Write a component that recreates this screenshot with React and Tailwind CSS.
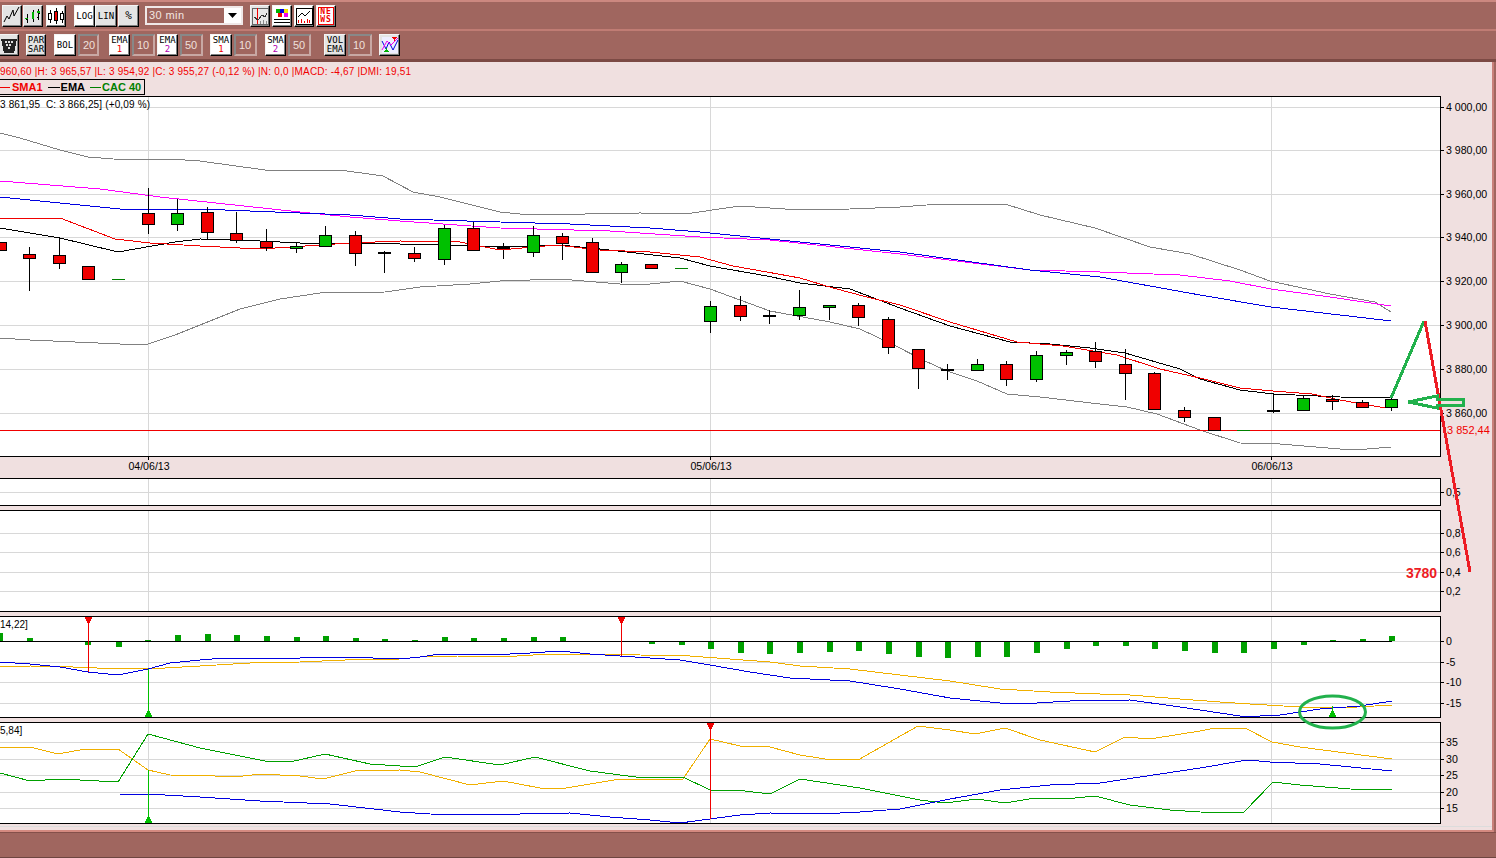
import React from "react";

const RED = "#f00000";
const CANDLES = [
  [0, "r", 242, 250, 242, 250], [29, "r", 254, 258, 247, 290], [59, "r", 255, 263, 238, 268], [88, "r", 266, 279, 266, 279],
  [118, "d", 279], [148, "r", 213, 224, 188, 233], [177, "g", 213, 224, 199, 230], [207, "r", 212, 232, 207, 238],
  [236, "r", 233, 240, 212, 242], [266, "r", 241, 247, 229, 250], [296, "g", 246, 248, 242, 252], [325, "g", 235, 246, 226, 246],
  [355, "r", 235, 253, 231, 265], [384, "k", 252, 251, 273], [414, "r", 253, 258, 247, 261], [444, "g", 228, 259, 225, 264],
  [473, "r", 228, 250, 222, 250], [503, "b", 247, 243, 259], [533, "g", 235, 252, 226, 256], [562, "r", 236, 243, 233, 259],
  [592, "r", 242, 272, 238, 272], [621, "g", 264, 272, 262, 282], [651, "r", 264, 268, 264, 268], [681, "d", 268],
  [710, "g", 306, 321, 301, 332], [740, "r", 305, 316, 296, 320], [769, "k", 315, 310, 324], [799, "g", 307, 315, 290, 319],
  [829, "g", 305, 307, 305, 319], [858, "r", 305, 317, 303, 325], [888, "r", 319, 347, 317, 353], [918, "r", 349, 368, 349, 388],
  [947, "k", 369, 364, 380], [977, "g", 364, 370, 359, 370], [1006, "r", 364, 379, 361, 385], [1036, "g", 355, 379, 351, 381],
  [1066, "g", 352, 355, 350, 364], [1095, "r", 351, 361, 342, 367], [1125, "r", 364, 373, 349, 399], [1154, "r", 373, 409, 372, 409],
  [1184, "r", 410, 417, 407, 421], [1214, "r", 417, 430, 417, 430], [1273, "k", 410, 393, 413], [1303, "g", 398, 410, 396, 410],
  [1332, "r", 399, 401, 395, 409], [1362, "r", 402, 407, 400, 407], [1391, "g", 399, 407, 397, 410],
];
const BOLU = "0,133 20,138 60,150 88,157 113,159 148,160 170,159 200,161 265,170 340,170 383,176 413,192 440,197 500,212 530,215 640,213 685,214 740,206 800,210 850,209 900,207 940,204 1005,204 1040,215 1095,228 1150,247 1190,254 1240,270 1270,281 1330,294 1375,302 1391,312";
const BOLL = "0,338 30,340 75,342 120,344 148,344 175,335 205,323 240,309 280,299 320,293 385,292 420,287 470,284 500,281 560,279 620,284 650,284 680,281 710,289 770,311 830,322 860,329 894,345 923,360 947,371 977,381 1007,394 1040,397 1100,404 1127,407 1157,414 1200,430 1240,443 1280,444 1340,449 1367,449 1391,447";
const MAG = "0,181 100,189 160,197 300,212 350,217 400,221 500,228 610,231 700,237 770,240 900,254 1030,270 1100,272 1180,275 1230,281 1271,289 1330,297 1391,306";
const BLU = "0,197 120,209 200,209 300,213 350,215 400,219 500,222 570,224 650,228 700,232 800,242 900,252 1030,270 1100,277 1200,295 1271,307 1340,315 1391,321";
const SMA = "0,218 60,218 115,239 150,243 200,246 260,249 350,243 400,241 460,242 500,250 556,245 600,250 650,252 700,257 733,266 767,272 800,278 833,288 867,297 900,305 950,322 1017,342 1040,344 1063,346 1117,355 1160,369 1200,378 1240,388 1273,391 1312,394 1340,400 1380,407 1391,408";
const EMA = "0,228 60,238 118,252 175,242 200,239 240,240 300,243 350,243 450,245 500,247 560,245 600,249 680,258 710,266 767,276 800,283 850,289 900,308 950,326 1010,342 1050,344 1090,348 1125,353 1180,369 1200,379 1240,390 1273,394 1340,397 1391,398";
const M_BLUE = "0,662 30,664 60,667 88,672 118,675 148,669 170,663 200,660 225,658 300,658 320,657 345,657 400,659 420,657 440,654 510,654 530,653 560,651 590,654 620,656 650,658 680,660 710,665 750,672 790,678 850,681 900,689 950,698 1000,703 1020,704 1070,701 1130,700 1180,707 1220,713 1240,716 1260,716 1280,715 1320,709 1360,706 1392,701";
const M_ORG = "0,667 30,666 73,667 120,669 148,668 165,668 200,666 250,663 300,662 345,660 400,659 420,657 458,656 517,656 550,654 635,654 640,655 690,656 730,659 770,662 800,666 850,669 900,675 950,681 1000,689 1050,692 1100,694 1130,695 1180,699 1220,702 1250,704 1300,707 1340,708 1392,705";
const D_ORG = "0,748 30,747 58,754 85,749 118,749 148,770 170,775 215,776 235,777 260,774 300,776 323,779 355,771 400,770 420,772 470,785 503,781 540,788 560,789 620,779 683,779 710,739 740,746 770,747 800,755 825,759 858,760 918,726 950,730 975,734 1005,728 1040,740 1095,752 1125,737 1150,739 1200,731 1215,728 1245,728 1272,742 1300,747 1392,759";
const D_GRN = "0,773 30,781 60,779 118,782 148,734 200,748 265,761 290,762 325,754 370,764 415,767 445,757 500,765 535,757 590,771 620,775 636,777 683,777 710,790 745,791 770,794 800,779 860,788 920,800 945,803 977,799 1005,803 1035,798 1065,799 1095,796 1130,805 1170,810 1200,812 1243,813 1273,782 1300,785 1350,789 1392,790";
const D_BLU = "119,794 165,795 200,797 260,801 330,804 400,812 430,814 490,815 520,814 570,813 610,817 650,820 680,823 710,819 740,815 770,813 820,814 860,812 900,809 950,799 1000,790 1050,785 1100,783 1200,768 1247,760 1270,762 1320,764 1392,771";
const BARS = [[0, 633], [30, 638], [88, 644], [119, 646], [148, 640], [178, 635], [208, 634], [237, 635], [267, 636], [297, 637], [326, 636], [356, 638], [385, 639], [415, 640], [445, 637], [474, 638], [504, 638], [534, 637], [563, 637], [652, 643], [682, 644], [711, 648], [741, 652], [770, 653], [800, 652], [830, 651], [859, 650], [889, 653], [919, 656], [948, 657], [978, 656], [1007, 656], [1037, 652], [1067, 648], [1096, 645], [1126, 645], [1155, 648], [1185, 650], [1215, 652], [1244, 652], [1274, 648], [1304, 644], [1333, 640], [1363, 639], [1392, 636]];

const font = { fontFamily: '"Liberation Sans", Arial, sans-serif' };
const mono = { fontFamily: '"DejaVu Sans Mono", "Liberation Mono", monospace' };

function Grid({ ys, x2 = 1440, top, bottom }) {
  return (
    <g shapeRendering="crispEdges" stroke="#d8d8d8">
      {ys.map((y) => <line key={y} x1="0" x2={x2} y1={y + 0.5} y2={y + 0.5} />)}
      {[148, 710, 1271].map((x) => <line key={x} x1={x + 0.5} x2={x + 0.5} y1={top} y2={bottom} />)}
    </g>
  );
}
function L({ p, c }) {
  return <polyline points={p} fill="none" stroke={c} strokeWidth="1" shapeRendering="crispEdges" />;
}
function Candle({ d }) {
  const [x, t] = d;
  const cx = x + 0.5;
  if (t === "d") return <rect x={x - 6} y={d[2]} width="13" height="1" fill="#008000" shapeRendering="crispEdges" />;
  if (t === "k" || t === "b") {
    return (
      <g shapeRendering="crispEdges">
        <line x1={cx} x2={cx} y1={d[3]} y2={d[4]} stroke="#000" />
        <rect x={x - 6} y={d[2]} width="13" height="2" fill="#000" />
        {t === "b" && <rect x={x - 6} y={d[2] + 2} width="13" height="1" fill={RED} />}
      </g>
    );
  }
  const [, , a, b, wt, wb] = d;
  return (
    <g shapeRendering="crispEdges">
      <line x1={cx} x2={cx} y1={wt} y2={wb + 1} stroke="#000" />
      <rect x={x - 5.5} y={a + 0.5} width="12" height={Math.max(b - a, 1)} fill={t === "r" ? RED : "#00c000"} stroke="#000" />
    </g>
  );
}
function Up({ x, y1, y2 }) {
  return (
    <g shapeRendering="crispEdges" fill="#00c000">
      <line x1={x + 0.5} x2={x + 0.5} y1={y1} y2={y2} stroke="#00c000" />
      <path d={`M${x - 3} ${y2}h7v-2h-1v-2h-1v-2h-3v2h-1v2h-1z`} />
    </g>
  );
}
function Down({ x, y1, y2 }) {
  return (
    <g shapeRendering="crispEdges" fill={RED}>
      <line x1={x + 0.5} x2={x + 0.5} y1={y1} y2={y2} stroke={RED} />
      <path d={`M${x - 3} ${y1}h7v2h-1v2h-1v2h-3v-2h-1v-2h-1z`} />
    </g>
  );
}
function Axis({ top, height, ticks }) {
  return (
    <svg width="52" height={height} viewBox={`1441 ${top} 52 ${height}`} className="block shrink-0" style={font}>
      {ticks.map(([y, label, color]) => (
        <g key={label}>
          {!color && <line x1="1441" x2="1444" y1={y + 0.5} y2={y + 0.5} stroke="#000" shapeRendering="crispEdges" />}
          <text x={color ? 1447 : 1446} y={y + 4} fontSize={color ? 11 : 10.6} fill={color || "#000"}>{label}</text>
        </g>
      ))}
    </svg>
  );
}
function Panel({ top, height, ticks, children, title }) {
  return (
    <div className="flex" style={{ height }}>
      <div className="relative w-[1441px] shrink-0 border-y border-r border-black bg-white overflow-hidden">
        <svg width="1440" height={height - 2} viewBox={`0 ${top + 1} 1440 ${height - 2}`} className="block">{children}</svg>
        {title}
      </div>
      <Axis top={top} height={height} ticks={ticks} />
    </div>
  );
}

const btnBase = "flex items-center justify-center shrink-0 h-[22px] border border-t-[#f4f4f4] border-l-[#f4f4f4] border-r-black border-b-black shadow-[inset_-1px_-1px_0_#808080] text-black text-[9px] leading-[10px] tracking-[0px]";
function Btn({ w = "w-[21px]", on, className = "", children }) {
  return <div className={`${btnBase} ${w} ${on ? "bg-white" : "bg-[#e4e4e4]"} ${className}`} style={mono}>{children}</div>;
}
function Field({ children, w = "w-[23px]" }) {
  return <div className={`flex items-center pl-[3px] shrink-0 h-[22px] ${w} border-2 border-t-[#888] border-l-[#888] border-r-[#c8a8a4] border-b-[#c8a8a4] bg-[#a0665f] text-[#efe0dc] text-[11px]`}>{children}</div>;
}
function Two({ a, b, c = "text-black" }) {
  return <div className="flex flex-col items-center leading-[9px]"><span>{a}</span><span className={c}>{b}</span></div>;
}
const Ico = ({ children }) => <svg width="18" height="18" viewBox="0 0 18 18" shapeRendering="crispEdges">{children}</svg>;

export default function App() {
  return (
    <div className="relative w-[1496px] h-[858px] overflow-hidden bg-[#a0665f] flex flex-col" style={font}>
      <div className="h-[30px] shrink-0 border-t-2 border-t-[#cc8880] border-b border-b-[#8a544e] flex items-center pl-[2px] -mb-px">
        <Btn w="w-[20px]"><Ico><path d="M1 15l3-6 2 3 4-9 1 6 5-9" fill="none" stroke="#000" shapeRendering="auto" /></Ico></Btn>
        <Btn w="w-[20px]" className="ml-px"><Ico><path d="M3 7v9M2 12h1M9 3v12M14 2v11M14 6h2M14 10h-1" stroke="#000" fill="none" /><path d="M8 5h2v7H8z" fill="#00b000" /><path d="M1 11h3v1H1zM13 4h3v2h-3z" fill="#00b000" /></Ico></Btn>
        <Btn on w="w-[20px]" className="ml-[3px]"><Ico><path d="M3 3v13M9 1v16M15 4v12" stroke="#000" /><rect x="1.5" y="6.5" width="3" height="6" fill="#fff" stroke="#000" /><rect x="7.5" y="4.5" width="3" height="9" fill="#f00000" stroke="#000" /><rect x="13.5" y="6.5" width="3" height="6" fill="#fff" stroke="#000" /></Ico></Btn>
        <Btn on className="ml-[8px]">LOG</Btn>
        <Btn w="w-[22px]">LIN</Btn>
        <Btn className="ml-px"><span className="text-[11px]">%</span></Btn>
        <div className="ml-[6px] w-[98px] h-[19px] shrink-0 border-2 border-[#f0e8e8] bg-[#a0665f] flex items-center justify-between">
          <span className="pl-[2px] text-[11px] tracking-[0.4px] text-[#f4e6e2]">30 min</span>
          <div className="w-[17px] h-[15px] bg-white flex items-center justify-center">
            <svg width="9" height="5" viewBox="0 0 9 5"><path d="M0 0h9L4.5 5z" fill="#000" /></svg>
          </div>
        </div>
        <Btn w="w-[20px]" className="ml-[7px]"><Ico><path d="M1 1h16v16H1z" fill="#e8e8e8" stroke="#666" /><path d="M6 1v16" stroke="#f00000" /><path d="M3 10l4 3 4-5 3 2 2-4" fill="none" stroke="#333" /><path d="M9 14h1v3H9zM12 13h1v4h-1zM15 14h1v3h-1z" fill="#888" /></Ico></Btn>
        <Btn on w="w-[20px]" className="ml-[2px]"><Ico><path d="M3 2h4v4H3z" fill="#00b000" /><path d="M7 2h4v4H7z" fill="#0000e0" /><path d="M11 2h4v4h-4z" fill="#f0e000" /><path d="M5 6h4v4H5z" fill="#f00000" /><path d="M11 6h4v4h-4z" fill="#f000f0" /><path d="M1 12h16v1H1zM1 15h16v1H1z" fill="#000" /></Ico></Btn>
        <Btn on w="w-[20px]" className="ml-[2px]"><Ico><path d="M1 1h16v16H1z" fill="#fff" stroke="#000" /><path d="M3 10l4-4 3 3 5-5" fill="none" stroke="#000" shapeRendering="auto" /><path d="M3 13h1v3H3zM6 12h1v4H6zM9 14h1v2H9zM12 12h1v4h-1zM14 13h1v3h-1z" fill="#f00000" /></Ico></Btn>
        <Btn on w="w-[20px]" className="ml-[2px]"><div className="flex flex-col items-center text-[8px] leading-[8px] font-bold text-[#f00000] border border-[#f00000] px-[1px] tracking-[1px]"><span>NE</span><span>WS</span></div></Btn>
      </div>
      <div className="h-[33px] shrink-0 border-t-2 border-t-[#c07c74] border-b-[3px] border-b-[#7c4a44] flex items-center text-[10px]">
        <Btn w="w-[20px]" className="-ml-px"><Ico><path d="M1 3h16l-3 14H4z" fill="#222" /><path d="M5 5h2v2H5zM8 5h2v2H8zM11 5h2v2h-2zM6 8h2v2H6zM9 8h2v2H9zM8 11h2v2H8z" fill="#ddd" /></Ico></Btn>
        <Btn w="w-[20px]" className="ml-[7px]"><Two a="PAR" b="SAR" /></Btn>
        <Btn on w="w-[22px]" className="ml-[8px]">BOL</Btn>
        <Field w="w-[21px] ml-[2px]">20</Field>
        <Btn on className="ml-[10px]"><Two a="EMA" b="1" c="text-[#f00000]" /></Btn>
        <Field w="w-[23px] ml-[2px]">10</Field>
        <Btn on className="ml-[2px]"><Two a="EMA" b="2" c="text-[#b000b0]" /></Btn>
        <Field w="w-[23px] ml-[2px]">50</Field>
        <Btn on w="w-[22px]" className="ml-[7px]"><Two a="SMA" b="1" c="text-[#f00000]" /></Btn>
        <Field w="w-[23px] ml-[2px]">10</Field>
        <Btn on className="ml-[8px]"><Two a="SMA" b="2" c="text-[#b000b0]" /></Btn>
        <Field w="w-[23px] ml-[2px]">50</Field>
        <Btn w="w-[22px]" className="ml-[13px]"><Two a="VOL" b="EMA" /></Btn>
        <Field w="w-[24px] ml-[2px]">10</Field>
        <Btn className="ml-[7px]"><Ico><path d="M1 1h16v16H1z" fill="#eef" /><path d="M1 5l4 8 3-7 4 8 5-10" fill="none" stroke="#0000e0" shapeRendering="auto" /><path d="M1 14l5-9 4 4 7-7" fill="none" stroke="#f000f0" shapeRendering="auto" /><path d="M11 1h5l-2.5 4z" fill="#f00000" /><path d="M3 16h5l-2.5-4z" fill="#00b000" /></Ico></Btn>
      </div>

      <div className="relative flex-1 min-h-0 bg-[#f0e0e0] border-r-2 border-r-[#c8807a] mr-[2px] border-b-2 border-b-[#d48a80] flex flex-col">
        <div className="h-[17px] shrink-0 text-[10px] leading-[19px] text-[#f00000] whitespace-nowrap tracking-[0.2px]">960,60 |H: 3 965,57 |L: 3 954,92 |C: 3 955,27 (-0,12 %) |N: 0,0 |MACD: -4,67 |DMI: 19,51</div>
        <div className="h-[16px] shrink-0 w-[145px] border border-l-0 border-black flex items-center text-[11px] font-bold leading-[14px] whitespace-nowrap">
          <span className="w-[10px] h-px bg-[#f00000]" />
          <span className="ml-[2px] text-[#f00000]">SMA1</span>
          <span className="ml-[5px] w-[12px] h-px bg-black" />
          <span className="ml-px text-black">EMA</span>
          <span className="ml-[5px] w-[11px] h-px bg-[#008000]" />
          <span className="ml-[1px] text-[#008000]">CAC 40</span>
        </div>
        <div className="h-px shrink-0" />
        <Panel
          top={96}
          height={361}
          ticks={[[107, "4 000,00"], [150, "3 980,00"], [194, "3 960,00"], [237, "3 940,00"], [281, "3 920,00"], [325, "3 900,00"], [369, "3 880,00"], [413, "3 860,00"], [430, "3 852,44", "#f00000"]]}
          title={<span className="absolute left-0 top-[1px] text-[10px] leading-[13px] text-black whitespace-pre tracking-[0.15px]">3 861,95  C: 3 866,25] (+0,09 %)</span>}
        >
          <Grid ys={[107, 150, 194, 237, 281, 325, 369, 413]} top={97} bottom={456} />
          <L p={BOLU} c="#808080" />
          <L p={BOLL} c="#808080" />
          <L p={MAG} c="#ff00ff" />
          <L p={BLU} c="#0000e0" />
          <L p={EMA} c="#000" />
          <L p={SMA} c={RED} />
          <line x1="0" x2="1440" y1="430.5" y2="430.5" stroke={RED} shapeRendering="crispEdges" />
          <rect x="1237" y="430" width="13" height="1" fill="#008000" />
          {CANDLES.map((d) => <Candle key={d[0]} d={d} />)}
        </Panel>
        <div className="h-[21px] shrink-0">
          <svg width="1441" height="21" viewBox="0 457 1441 21" className="block" style={font}>
            {[["04/06/13", 148], ["05/06/13", 710], ["06/06/13", 1271]].map(([t, x]) => (
              <g key={t}>
                <line x1={x + 0.5} x2={x + 0.5} y1="457" y2="460" stroke="#000" shapeRendering="crispEdges" />
                <text x={x + 1} y="470" fontSize="10.6" textAnchor="middle" fill="#000">{t}</text>
              </g>
            ))}
          </svg>
        </div>
        <Panel top={478} height={28} ticks={[[492, "0,5"]]}>
          <Grid ys={[492]} top={479} bottom={505} />
        </Panel>
        <div className="h-[4px] shrink-0" />
        <Panel top={510} height={102} ticks={[[533, "0,8"], [552, "0,6"], [572, "0,4"], [591, "0,2"]]}>
          <Grid ys={[533, 552, 572, 591]} top={511} bottom={611} />
        </Panel>
        <div className="h-[4px] shrink-0" />
        <Panel
          top={616}
          height={102}
          ticks={[[641, "0"], [662, "-5"], [682, "-10"], [703, "-15"]]}
          title={<span className="absolute left-0 top-[1px] text-[10px] leading-[13px] text-black">14,22]</span>}
        >
          <Grid ys={[641, 662, 682, 703]} top={617} bottom={717} />
          <line x1="0" x2="1392" y1="641.5" y2="641.5" stroke="#000" shapeRendering="crispEdges" />
          {BARS.map(([x, y]) => {
            const t = Math.min(y, 641);
            const h = y < 641 ? 641 - y : y - 641;
            return <rect key={x} x={x - 3} y={y < 641 ? t : 642} width="6" height={h} fill="#00a000" shapeRendering="crispEdges" />;
          })}
          <L p={M_ORG} c="#f0b000" />
          <L p={M_BLUE} c="#0000e0" />
          <Down x={88} y1={617} y2={672} />
          <Down x={621} y1={617} y2={656} />
          <Up x={148} y1={669} y2={717} />
          <Up x={1332} y1={706} y2={717} />
        </Panel>
        <div className="h-[4px] shrink-0" />
        <Panel
          top={722}
          height={102}
          ticks={[[742, "35"], [759, "30"], [775, "25"], [792, "20"], [808, "15"]]}
          title={<span className="absolute left-0 top-[1px] text-[10px] leading-[13px] text-black">5,84]</span>}
        >
          <Grid ys={[742, 759, 775, 792, 808]} top={723} bottom={823} />
          <L p={D_ORG} c="#f0b000" />
          <L p={D_GRN} c="#00a000" />
          <L p={D_BLU} c="#0000e0" />
          <Down x={710} y1={723} y2={819} />
          <Up x={148} y1={770} y2={823} />
        </Panel>
        <div className="mt-[2px] h-px w-full bg-[#dcdcdc]" />
        <svg width="1492" height="768" viewBox="0 62 1492 768" className="absolute left-0 top-0 pointer-events-none">
          <g fill="none" strokeWidth="3" shapeRendering="crispEdges">
            <path d="M1391 398L1424 321" stroke="#22b14c" />
            <path d="M1425 321L1470 572" stroke="#ed1c24" />
            <path d="M1408 402L1437 396V399H1463V405H1437V408Z" stroke="#22b14c" />
            <ellipse cx="1332.5" cy="712" rx="33" ry="16" stroke="#22b14c" shapeRendering="auto" />
          </g>
          <text x="1406" y="578" fontSize="14" fontWeight="700" fill="#ed1c24">3780</text>
        </svg>
      </div>
      <div className="h-[26px] shrink-0 border-t border-t-[#84504a] border-b border-b-[#6e4540]" />
    </div>
  );
}
